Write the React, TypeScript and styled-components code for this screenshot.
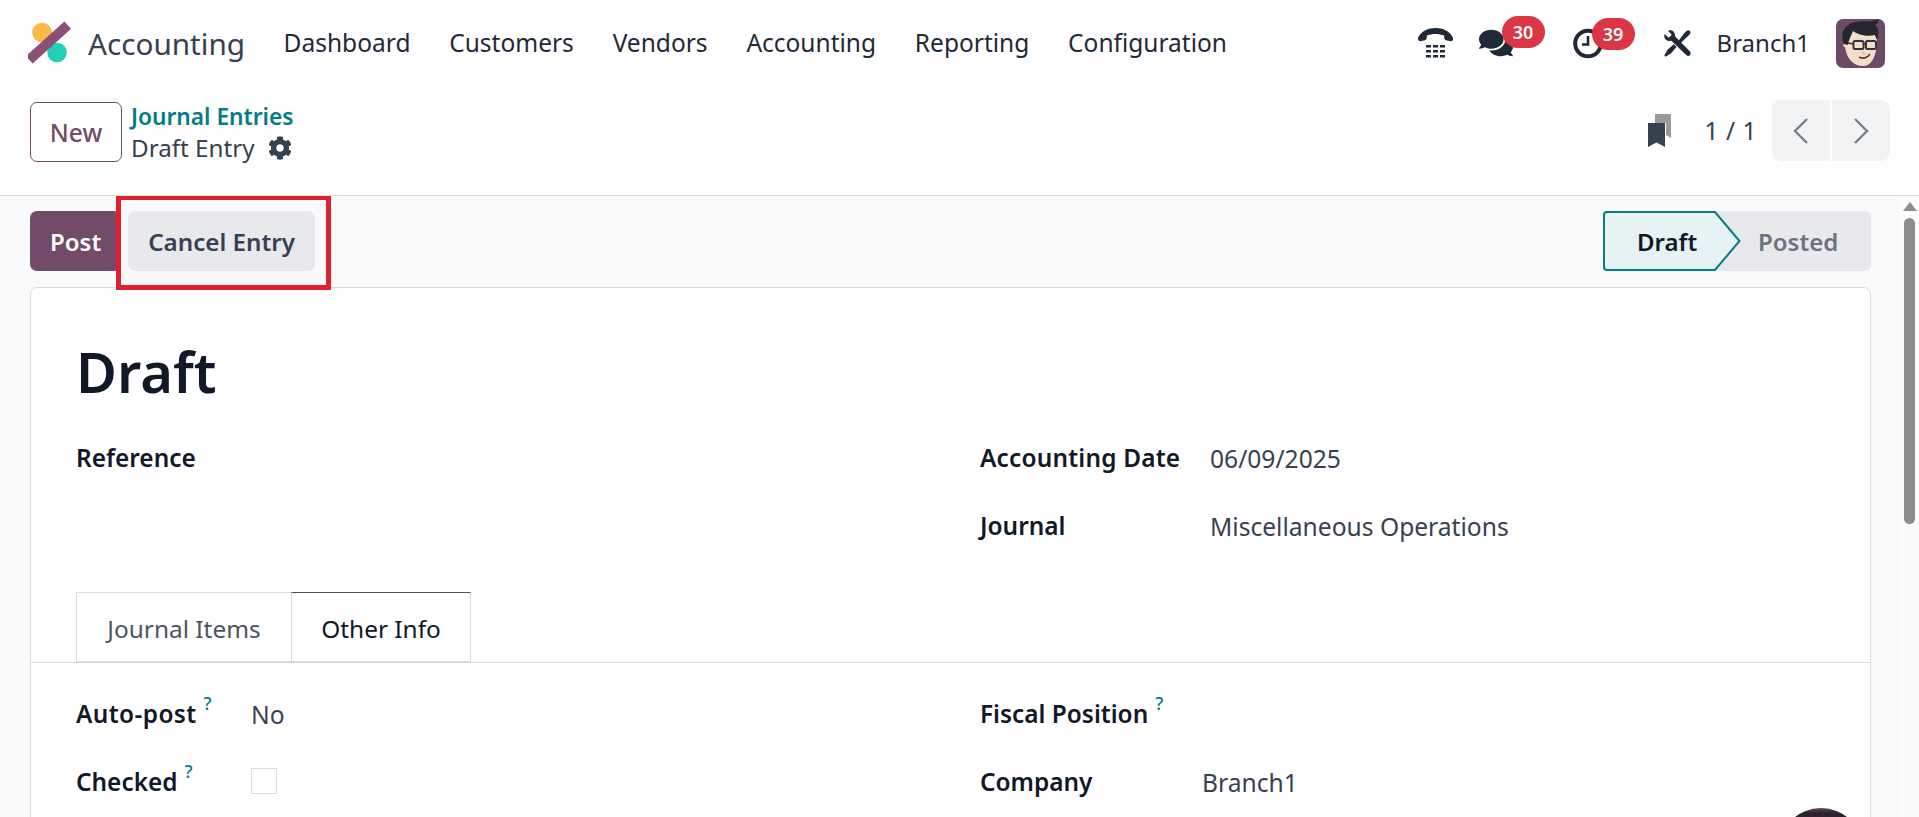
import React from "react";
import styled, { createGlobalStyle } from "styled-components";
import { FaComments, FaCog } from "react-icons/fa";

const Global = createGlobalStyle`
  html, body { margin: 0; padding: 0; height: 100%; overflow: hidden; }
  body { font-family: "Noto Sans", "Open Sans", sans-serif; color: #374151; background: #fff; }
  * { box-sizing: border-box; }
`;

const Root = styled.div`
  height: 100vh;
  display: flex;
  flex-direction: column;
  overflow: hidden;
  position: relative;
`;

const Nav = styled.header`
  height: 86px;
  flex: none;
  display: flex;
  align-items: center;
  padding: 0 34px 0 28px;
  background: #fff;
`;
const Brand = styled.div`
  display: flex;
  align-items: center;
  gap: 16px;
  margin-right: 38.5px;
  font-size: 29.7px;
  color: #374151;
`;
const MenuItem = styled.span`
  font-size: 24.5px;
  color: #1f2937;
  margin-right: 38.800px;
  padding-bottom: 2px;
`;
const NavRight = styled.div`
  margin-left: auto;
  display: flex;
  align-items: center;
`;
const IconSlot = styled.span<{ $ml: number }>`
  position: relative;
  display: flex;
  margin-left: ${(p) => p.$ml}px;
  color: #1f2937;
`;
const Badge = styled.span<{ $left: number }>`
  position: absolute;
  top: -10px;
  left: ${(p) => p.$left}px;
  width: 43px;
  height: 32px;
  border-radius: 16px;
  background: #dc3545;
  color: #fff;
  font-size: 18px;
  font-weight: 600;
  display: flex;
  align-items: center;
  justify-content: center;
`;
const UserName = styled.span`
  font-size: 24px;
  color: #1f2937;
  margin-left: 26px;
  margin-right: 26px;
  padding-bottom: 2px;
`;
const Avatar = styled.svg`
  width: 49px;
  height: 49px;
  border-radius: 7px;
  display: block;
`;

const ControlPanel = styled.div`
  height: 110px;
  flex: none;
  display: flex;
  align-items: flex-start;
  padding: 16px 29px 0 30px;
  background: #fff;
  border-bottom: 1px solid #d8dadd;
`;
const NewButton = styled.button`
  width: 92px;
  height: 60px;
  border: 1px solid #714b67;
  border-radius: 7px;
  background: #fff;
  color: #714b67;
  font: 500 24.5px "Noto Sans", sans-serif;
  padding: 0;
`;
const Breadcrumb = styled.div`
  margin: -1px 0 0 9px;
  display: flex;
  flex-direction: column;
  line-height: 31px;
`;
const CrumbLink = styled.span`
  font-size: 22.7px;
  font-weight: 600;
  color: #017e84;
`;
const CrumbCurrent = styled.span`
  display: flex;
  align-items: center;
  gap: 13px;
  font-size: 24.2px;
  color: #374151;
`;
const PagerArea = styled.div`
  margin-left: auto;
  display: flex;
  align-items: center;
  margin-top: -2px;
`;
const PagerText = styled.span`
  font-size: 24.5px;
  color: #374151;
  margin: 0 15.5px 0 34px;
  word-spacing: 1px;
`;
const PagerButton = styled.button<{ $side: "l" | "r" }>`
  width: 58px;
  height: 61px;
  border: none;
  padding: 0;
  background: #f1f3f5;
  display: flex;
  align-items: center;
  justify-content: center;
  margin-left: ${(p) => (p.$side === "r" ? "2px" : "0")};
  border-radius: ${(p) => (p.$side === "l" ? "9px 0 0 9px" : "0 9px 9px 0")};
`;

const Body = styled.div`
  flex: 1;
  min-height: 0;
  display: flex;
  background: #f9fafb;
`;
const Main = styled.main`
  flex: 1;
  min-width: 0;
  padding: 15px 29px 0 30px;
  overflow: hidden;
`;
const ScrollTrack = styled.div`
  flex: none;
  width: 19px;
  background: #fcfcfc;
  display: flex;
  flex-direction: column;
  align-items: center;
  padding-top: 6px;
`;
const ScrollArrow = styled.span`
  width: 0;
  height: 0;
  border-left: 7px solid transparent;
  border-right: 7px solid transparent;
  border-bottom: 9px solid #8c8c8c;
`;
const ScrollThumb = styled.span`
  margin-top: 7px;
  width: 11px;
  height: 306px;
  border-radius: 6px;
  background: #8c8c8c;
`;

const ActionBar = styled.div`
  display: flex;
  align-items: stretch;
  height: 60px;
`;
const ActionButton = styled.button<{ $primary?: boolean }>`
  height: 60px;
  border: none;
  border-radius: 7px;
  padding: 0 20px;
  font: 600 ${(p) => (p.$primary ? "24px" : "24.2px")} "Noto Sans", sans-serif;
  color: ${(p) => (p.$primary ? "#fff" : "#374151")};
  background: ${(p) => (p.$primary ? "#714b67" : "#e7e9ed")};
`;
const Highlighted = styled.div`
  position: relative;
  margin-left: 7px;
`;
const RedMark = styled.span`
  position: absolute;
  top: -16px;
  left: -12px;
  right: -16px;
  bottom: -19px;
  border: 5px solid #e0202e;
  pointer-events: none;
`;
const StatusBar = styled.div`
  margin-left: auto;
  display: flex;
  align-items: center;
  width: 268px;
  height: 60px;
  background: #e7e9ed;
  border-radius: 5px;
`;
const StatusDraft = styled.div`
  position: relative;
  width: 138px;
  height: 60px;
  padding-left: 34px;
  display: flex;
  align-items: center;
  font-size: 24px;
  font-weight: 600;
  color: #111827;
`;
const StatusShape = styled.svg`
  position: absolute;
  inset: 0;
  width: 138px;
  height: 60px;
`;
const StatusText = styled.span`
  position: relative;
`;
const StatusPosted = styled.span`
  margin-left: 17px;
  font-size: 24px;
  font-weight: 600;
  color: #6b7280;
`;

const Sheet = styled.section`
  margin-top: 16px;
  background: #fff;
  border: 1px solid #d8dadd;
  border-radius: 7px 7px 0 0;
  height: 700px;
`;
const SheetHead = styled.div`
  padding: 43px 45px 0;
`;
const Title = styled.h1`
  margin: 0 0 13px;
  height: 80px;
  line-height: 80px;
  font-size: 56px;
  font-weight: 600;
  color: #111827;
`;
const Columns = styled.div`
  display: grid;
  grid-template-columns: 904px 1fr;
`;
const Row = styled.div<{ $label: number; $h?: number }>`
  display: grid;
  grid-template-columns: ${(p) => p.$label}px 1fr;
  align-items: center;
  height: ${(p) => p.$h ?? 68}px;
`;
const Label = styled.span<{ $spread?: number }>`
  font-size: 24.4px;
  font-weight: 600;
  color: #111827;
  display: flex;
  align-items: flex-start;
  padding-bottom: 2px;
  letter-spacing: ${(p) => p.$spread ?? 0}px;
`;
const Help = styled.sup`
  font-size: 18px;
  font-weight: 500;
  color: #017e84;
  line-height: 1;
  margin: -3px 0 0 7px;
  vertical-align: baseline;
`;
const Value = styled.span`
  font-size: 24.6px;
  color: #374151;
  padding-top: 1px;
`;
const Checkbox = styled.span`
  display: block;
  width: 26px;
  height: 26px;
  margin-top: -2px;
  border: 1px solid #d8dadd;
  background: #fff;
`;
const Tabs = styled.div`
  margin-top: 32px;
  height: 71px;
  padding-left: 45px;
  display: flex;
  border-bottom: 1px solid #d8dadd;
`;
const Tab = styled.div<{ $active?: boolean; $w: number }>`
  width: ${(p) => p.$w}px;
  height: 70px;
  padding-top: 3px;
  margin-left: ${(p) => (p.$active ? "-1px" : "0")};
  border: 1px solid #d8dadd;
  border-top-color: ${(p) => (p.$active ? "#5c4a57" : "#d8dadd")};
  display: flex;
  align-items: center;
  justify-content: center;
  font-size: 24.4px;
  color: ${(p) => (p.$active ? "#111827" : "#4b5563")};
`;
const Panel = styled.div`
  padding: 17px 45px 0;
`;
const ChatBubble = styled.div`
  position: absolute;
  left: 1779px;
  top: 808px;
  width: 84px;
  height: 84px;
  border-radius: 50%;
  background: linear-gradient(180deg, #6b3f63 0, #2e2230 5px, #2a1f2c 100%);
`;

const Logo = () => (
  <svg width="44" height="52" viewBox="0 0 44 52" aria-hidden="true">
    <circle cx="14" cy="15.500" r="9.800" fill="#fbb945" />
    <circle cx="29" cy="35.500" r="9.800" fill="#21d0b7" />
    <path d="M5 39.500 L36 11.500" stroke="#8c4f75" strokeWidth="10" strokeLinecap="square" strokeLinejoin="round" />
  </svg>
);

const PhoneIcon = () => (
  <svg width="35" height="31" viewBox="0 0 35 31" fill="#1f2937" aria-hidden="true">
    <path d="M0 10C3 3 10 0 17.5 0S32 3 35 10c.3 2-.5 3.2-2 3.2l-5-1c-1.300-.3-1.800-1.200-1.800-2.400V7.600C23.500 6.500 20.500 6 17.500 6s-6 .5-8.700 1.600v2.200c0 1.200-.5 2.100-1.800 2.400l-5 1C1 13.200-.3 12 0 10z" />
    <rect x="8" y="17" width="5" height="2.500" /><rect x="15" y="17" width="5" height="2.500" /><rect x="22" y="17" width="5" height="2.500" />
    <rect x="8" y="22" width="5" height="2.500" /><rect x="15" y="22" width="5" height="2.500" /><rect x="22" y="22" width="5" height="2.500" />
    <rect x="8" y="27" width="5" height="2.500" /><rect x="15" y="27" width="5" height="2.500" /><rect x="22" y="27" width="5" height="2.500" />
  </svg>
);

const ClockIcon = () => (
  <svg width="30" height="31" viewBox="0 0 30 31" aria-hidden="true">
    <circle cx="15" cy="15.500" r="12.800" fill="none" stroke="#1f2937" strokeWidth="4" />
    <path d="M15 8v8.500H9" fill="none" stroke="#1f2937" strokeWidth="2.600" />
  </svg>
);

const ToolsIcon = () => (
  <svg width="27" height="27" viewBox="0 0 27 27" fill="#1f2937" aria-hidden="true">
    <path d="M.7 4 4.600 7.800 7.800 4.800 4 .8C7.500-.6 11.300 1.500 11 6.300L26 21.600c.9 1.200.8 2.700-.1 3.700-1 .9-2.500.9-3.400-.1L7.300 10.800C2.800 11.700-1 8.600.7 4z" />
    <path d="M20 3.600 22.500 1c1-.9 2.400-.9 3.300 0 .9 1 .9 2.300 0 3.300L23 7 16.500 13.200 14.400 11zM9.700 14.200 12.600 17.100 6.800 23.600 1.500 26.800.3 25.500 3.300 20z" />
  </svg>
);

const BookmarksIcon = () => (
  <svg width="23" height="33" viewBox="0 0 23 33" aria-hidden="true">
    <path d="M7 0h16v24l-5-3V9H7z" fill="#9a9a9e" />
    <path d="M0 9h17v24l-8.500-4.500L0 33z" fill="#374151" />
  </svg>
);

const Chevron = ({ left }: { left?: boolean }) => (
  <svg width="16" height="28" viewBox="0 0 16 28" aria-hidden="true">
    <path d={left ? "M14 2 2 14l12 12" : "M2 2l12 12L2 26"} fill="none" stroke="#7b7f85" strokeWidth="2.400" />
  </svg>
);

const Face = () => (
  <Avatar viewBox="0 0 49 49" aria-hidden="true">
    <rect width="49" height="49" fill="#6d4a66" />
    <path d="M7 27c2 1 3 3 4 4l-2-10z" fill="#e9cdb6" />
    <path d="M9 22C8 34 14 47 27 47c9 0 14-11 14-27l-5-10H14z" fill="#f2dfcb" />
    <path d="M8 25C3 13 10 4 20 3c8-2 15 1 23-3-1 4-2 5-4 6 4 3 4 9 2 15l-2-5c-7 2-17 0-22-4-2 5-4 8-5 14z" fill="#26262e" />
    <rect x="17.500" y="22" width="10" height="8" rx="1.500" fill="none" stroke="#33333b" strokeWidth="2" />
    <rect x="30" y="22" width="10" height="8" rx="1.500" fill="none" stroke="#33333b" strokeWidth="2" />
    <path d="M27.500 25h2.500M12 24l5.500 1" stroke="#33333b" strokeWidth="1.500" />
    <path d="M23 38c4 2 8 1 11-3" fill="none" stroke="#5b4036" strokeWidth="1.600" />
    <path d="M28 32l-1 3h3" fill="none" stroke="#d9b79c" strokeWidth="1" />
  </Avatar>
);

export default function App() {
  return (
    <Root>
      <Global />
      <Nav>
        <Brand>
          <Logo />
          Accounting
        </Brand>
        {["Dashboard", "Customers", "Vendors", "Accounting", "Reporting", "Configuration"].map((m) => (
          <MenuItem key={m}>{m}</MenuItem>
        ))}
        <NavRight>
          <IconSlot $ml={0}><PhoneIcon /></IconSlot>
          <IconSlot $ml={26}>
            <FaComments size={34} />
            <Badge $left={23}>30</Badge>
          </IconSlot>
          <IconSlot $ml={60}>
            <ClockIcon />
            <Badge $left={19}>39</Badge>
          </IconSlot>
          <IconSlot $ml={61}><ToolsIcon /></IconSlot>
          <UserName>Branch1</UserName>
          <Face />
        </NavRight>
      </Nav>
      <ControlPanel>
        <NewButton>New</NewButton>
        <Breadcrumb>
          <CrumbLink>Journal Entries</CrumbLink>
          <CrumbCurrent>Draft Entry <FaCog size={24} /></CrumbCurrent>
        </Breadcrumb>
        <PagerArea>
          <BookmarksIcon />
          <PagerText>1 / 1</PagerText>
          <PagerButton $side="l"><Chevron left /></PagerButton>
          <PagerButton $side="r"><Chevron /></PagerButton>
        </PagerArea>
      </ControlPanel>
      <Body>
        <Main>
          <ActionBar>
            <ActionButton $primary>Post</ActionButton>
            <Highlighted>
              <ActionButton>Cancel Entry</ActionButton>
              <RedMark />
            </Highlighted>
            <StatusBar>
              <StatusDraft>
                <StatusShape viewBox="0 0 138 60" aria-hidden="true">
                  <path d="M4 1H112L136.500 30 112 59H4Q1 59 1 56V4Q1 1 4 1Z" fill="#e6f2f3" stroke="#017e84" strokeWidth="2" />
                </StatusShape>
                <StatusText>Draft</StatusText>
              </StatusDraft>
              <StatusPosted>Posted</StatusPosted>
            </StatusBar>
          </ActionBar>
          <Sheet>
            <SheetHead>
              <Title>Draft</Title>
              <Columns>
                <div>
                  <Row $label={200}><Label>Reference</Label></Row>
                </div>
                <div>
                  <Row $label={230}><Label $spread={0.2}>Accounting Date</Label><Value>06/09/2025</Value></Row>
                  <Row $label={230}><Label>Journal</Label><Value>Miscellaneous Operations</Value></Row>
                </div>
              </Columns>
            </SheetHead>
            <Tabs>
              <Tab $w={216}>Journal Items</Tab>
              <Tab $w={180} $active>Other Info</Tab>
            </Tabs>
            <Panel>
              <Columns>
                <div>
                  <Row $label={175}><Label $spread={0.4}>Auto-post<Help>?</Help></Label><Value>No</Value></Row>
                  <Row $label={175}><Label>Checked<Help>?</Help></Label><Checkbox /></Row>
                </div>
                <div>
                  <Row $label={222}><Label>Fiscal Position<Help>?</Help></Label><span /></Row>
                  <Row $label={222}><Label>Company</Label><Value>Branch1</Value></Row>
                </div>
              </Columns>
            </Panel>
          </Sheet>
        </Main>
        <ScrollTrack>
          <ScrollArrow />
          <ScrollThumb />
        </ScrollTrack>
      </Body>
      <ChatBubble />
    </Root>
  );
}
